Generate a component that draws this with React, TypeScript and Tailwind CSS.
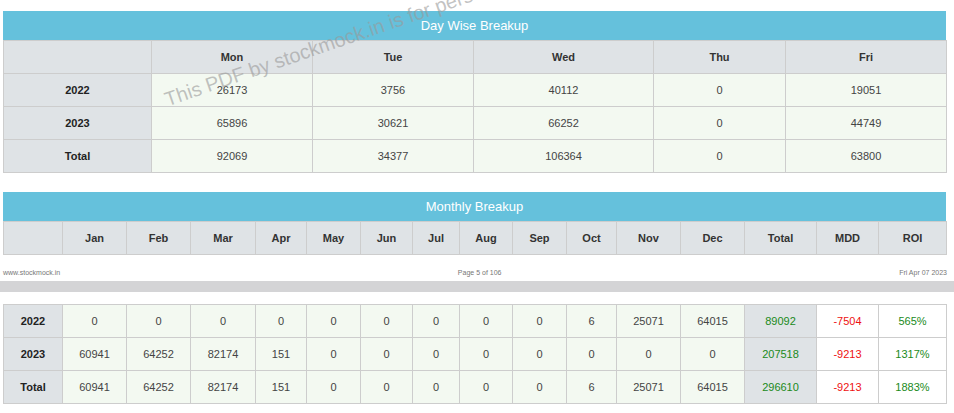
const F = { fontFamily: '"Liberation Sans", Arial, sans-serif' };

const dayCols = [148, 161, 161, 180, 132, 161];
const monCols = [59, 64, 64, 65, 51, 54, 52, 47, 53, 54, 50, 64, 64, 72, 62, 68];
const months = ["Jan", "Feb", "Mar", "Apr", "May", "Jun", "Jul", "Aug", "Sep", "Oct", "Nov", "Dec"];

const dayRows = [
  ["2022", "26173", "3756", "40112", "0", "19051"],
  ["2023", "65896", "30621", "66252", "0", "44749"],
  ["Total", "92069", "34377", "106364", "0", "63800"],
];

const monRows = [
  ["2022", "0", "0", "0", "0", "0", "0", "0", "0", "0", "6", "25071", "64015", "89092", "-7504", "565%"],
  ["2023", "60941", "64252", "82174", "151", "0", "0", "0", "0", "0", "0", "0", "0", "207518", "-9213", "1317%"],
  ["Total", "60941", "64252", "82174", "151", "0", "0", "0", "0", "0", "6", "25071", "64015", "296610", "-9213", "1883%"],
];

const cell = "border border-[#cdcdcd] h-[33px] text-center text-[11px]";

function Cols({ w }: { w: number[] }) {
  return <colgroup>{w.map((x, i) => <col key={i} style={{ width: x }} />)}</colgroup>;
}

export default function App() {
  return (
    <div className="relative w-[954px] h-[413px] bg-white overflow-hidden" style={F}>
      <div className="pt-[11px] pl-[3px]">
        <div className="w-[943px] h-[29px] bg-[#65c1dc] text-white text-[13px] flex items-center justify-center">Day Wise Breakup</div>
        <table className="w-[943px] border-collapse table-fixed">
          <Cols w={dayCols} />
          <tbody>
            <tr className="bg-[#dfe3e6] font-bold text-[#333]">
              {["", "Mon", "Tue", "Wed", "Thu", "Fri"].map((h, i) => <td key={i} className={cell}>{h}</td>)}
            </tr>
            {dayRows.map((r) => (
              <tr key={r[0]}>
                {r.map((v, i) => (
                  <td key={i} className={`${cell} ${i === 0 ? "bg-[#dfe3e6] font-bold text-[#222]" : "bg-[#f3f9f1] text-[#444]"}`}>{v}</td>
                ))}
              </tr>
            ))}
          </tbody>
        </table>

        <div className="mt-[19px] w-[943px] h-[29px] bg-[#65c1dc] text-white text-[13px] flex items-center justify-center">Monthly Breakup</div>
        <table className="w-[943px] border-collapse table-fixed">
          <Cols w={monCols} />
          <tbody>
            <tr className="bg-[#dfe3e6] font-bold text-[#333]">
              {["", ...months, "Total", "MDD", "ROI"].map((h, i) => <td key={i} className={cell}>{h}</td>)}
            </tr>
          </tbody>
        </table>
      </div>

      <div className="mt-[13px] px-[3px] w-[950px] flex justify-between text-[7px] text-[#777] h-[10px] items-center">
        <span>www.stockmock.in</span>
        <span>Page 5 of 106</span>
        <span>Fri Apr 07 2023</span>
      </div>
      <div className="mt-[3px] h-[11px] bg-[#d4d4d6]" />

      <div className="mt-[12px] pl-[3px]">
        <table className="w-[943px] border-collapse table-fixed">
          <Cols w={monCols} />
          <tbody>
            {monRows.map((r) => (
              <tr key={r[0]}>
                {r.map((v, i) => {
                  let c = "bg-[#f3f9f1] text-[#444]";
                  if (i === 0) c = "bg-[#dfe3e6] font-bold text-[#222]";
                  else if (i === 13) c = "bg-[#dfe3e6] text-[#1a8a1a]";
                  else if (i === 14) c = "bg-white text-[#ee1111]";
                  else if (i === 15) c = "bg-white text-[#1a8a1a]";
                  return <td key={i} className={`${cell} ${c}`}>{v}</td>;
                })}
              </tr>
            ))}
          </tbody>
        </table>
      </div>

      <div className="absolute left-[170px] top-[84px] text-[20px] text-[#9a9a9a]/60 whitespace-nowrap origin-bottom-left -rotate-[19deg] pointer-events-none">
        This PDF by stockmock.in is for personal use
      </div>
    </div>
  );
}
